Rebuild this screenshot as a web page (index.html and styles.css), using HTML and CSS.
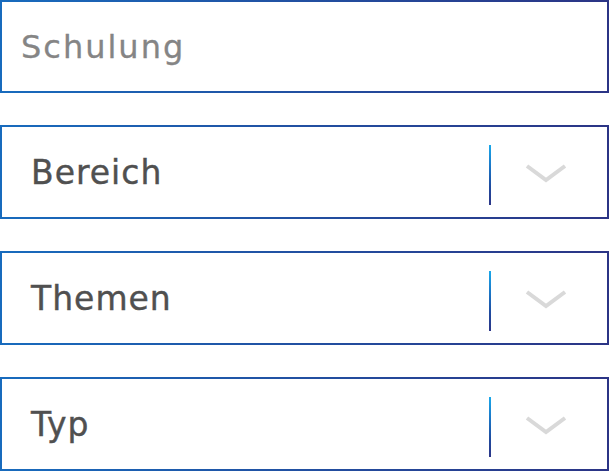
FILE: index.html
```html
<!DOCTYPE html>
<html lang="de">
<head>
<meta charset="utf-8">
<link rel="stylesheet" href="styles.css">
</head>
<body>
<div class="form">
  <div class="field input"><span class="placeholder">Schulung</span></div>
  <div class="field select">
    <span class="label">Bereich</span>
    <span class="divider"></span>
    <svg class="chevron" width="44" height="22" viewBox="0 0 44 22"><path d="M3 3 L22 17 L41 3" fill="none" stroke="#d9d9d9" stroke-width="4"/></svg>
  </div>
  <div class="field select">
    <span class="label">Themen</span>
    <span class="divider"></span>
    <svg class="chevron" width="44" height="22" viewBox="0 0 44 22"><path d="M3 3 L22 17 L41 3" fill="none" stroke="#d9d9d9" stroke-width="4"/></svg>
  </div>
  <div class="field select">
    <span class="label">Typ</span>
    <span class="divider"></span>
    <svg class="chevron" width="44" height="22" viewBox="0 0 44 22"><path d="M3 3 L22 17 L41 3" fill="none" stroke="#d9d9d9" stroke-width="4"/></svg>
  </div>
</div>
</body>
</html>
```
FILE: styles.css
```css
html, body {
  margin: 0;
  padding: 0;
  background: #ffffff;
}
.form {
  display: flex;
  flex-direction: column;
  gap: 32px;
  width: 609px;
}
.field {
  box-sizing: border-box;
  height: 94px;
  border: 2px solid;
  border-image: linear-gradient(to right, #186bbd, #2b3485) 1;
  display: flex;
  align-items: center;
  font-family: "DejaVu Sans", sans-serif;
}
.input {
  height: 93px;
  padding-left: 19px;
}
.placeholder {
  font-size: 32px;
  color: #858585;
  letter-spacing: 2px;
  -webkit-text-stroke: 0.3px #858585;
}
.select {
  padding-left: 29px;
}
.label {
  font-size: 33px;
  color: #505050;
  flex: 1;
  letter-spacing: 1px;
  -webkit-text-stroke: 0.4px #505050;
}
.divider {
  width: 2px;
  height: 60px;
  background: linear-gradient(to bottom, #1aa8ea, #1b78c8 35%, #1f4a9e 70%, #2c3688);
  margin-right: 33px;
  margin-top: 6px;
}
.chevron {
  margin-right: 39px;
  margin-top: 4px;
}
```
